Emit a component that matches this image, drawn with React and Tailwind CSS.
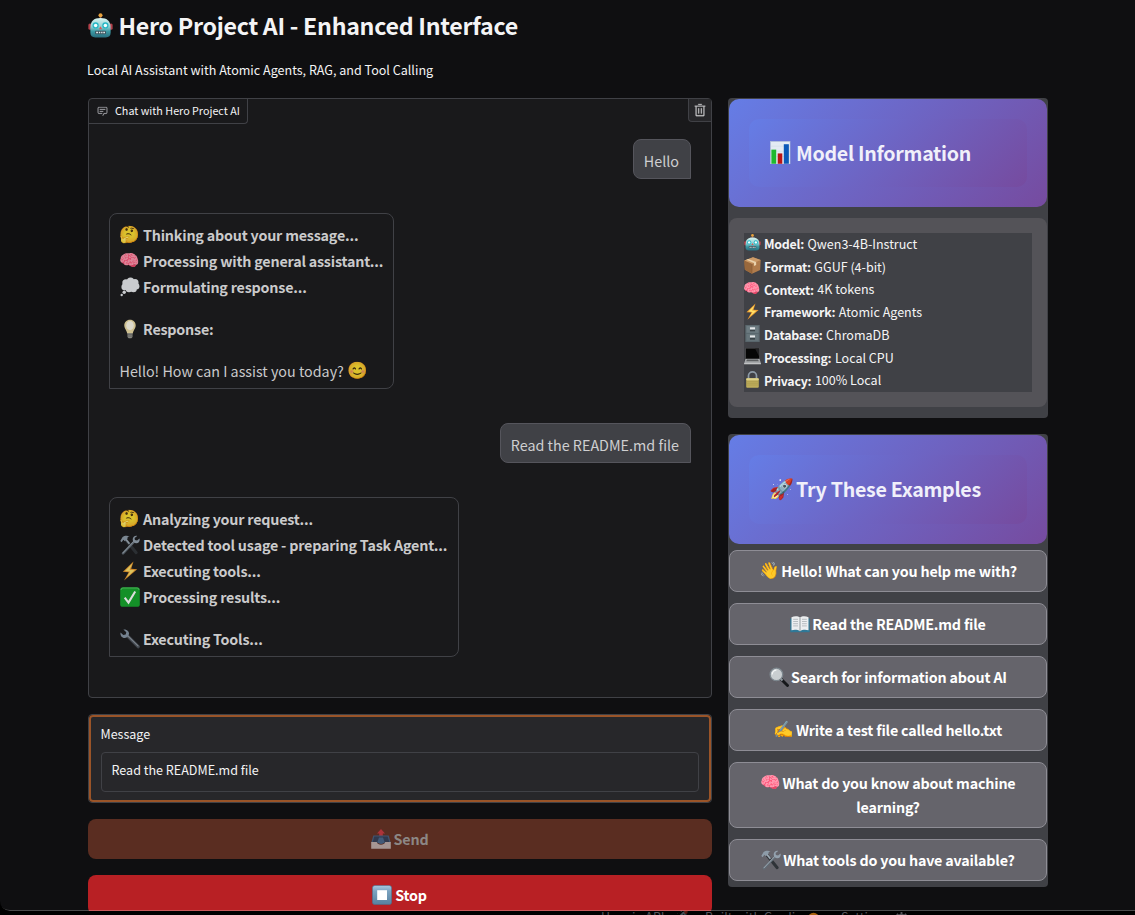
import React from 'react';

const FONT = 'font-["Noto_Sans_CJK_SC","Noto_Sans",sans-serif]';

function Robot() {
  return (
    <svg viewBox="0 0 20 20" className="h-full w-full">
      <defs>
        <linearGradient id="rb" x1="0" y1="0" x2="0" y2="1">
          <stop offset="0" stopColor="#d9f4f2" />
          <stop offset=".45" stopColor="#8ccfd2" />
          <stop offset=".7" stopColor="#3b98a3" />
          <stop offset="1" stopColor="#2a6f80" />
        </linearGradient>
      </defs>
      <rect x="9.3" y="2" width="1.4" height="3" fill="#8a5a4b" />
      <circle cx="10" cy="1.7" r="1.6" fill="#e8a13c" />
      <rect x="0.3" y="8.4" width="2.6" height="5" rx="1.2" fill="#b4404a" />
      <rect x="17.1" y="8.4" width="2.6" height="5" rx="1.2" fill="#b4404a" />
      <path d="M1.9 12C1.9 6.5 4.6 4 10 4s8.1 2.500 8.100 8v3.600c0 2.600-1.300 3.900-3.900 3.900H5.800c-2.600 0-3.900-1.300-3.900-3.900z" fill="url(#rb)" />
      <circle cx="6.100" cy="9.900" r="2.500" fill="#27b7c6" />
      <circle cx="13.900" cy="9.900" r="2.500" fill="#27b7c6" />
      <circle cx="6.100" cy="9.900" r="1.400" fill="#f4ffff" />
      <circle cx="13.900" cy="9.900" r="1.400" fill="#f4ffff" />
      <path d="M10 10.500l1.200 2.400H8.800z" fill="#e05252" />
      <rect x="5.600" y="14.200" width="8.800" height="2.700" rx=".8" fill="#3d5560" />
      <path d="M6.500 14.900h1.500v1.300H6.500zM8.700 14.900h1.100v1.300H8.700zM10.500 14.900h1.100v1.300h-1.100zM12.200 14.900h1.400v1.300h-1.400z" fill="#dfe9ea" />
    </svg>
  );
}

function Chart() {
  return (
    <svg viewBox="0 0 20 20" className="h-full w-full">
      <rect x=".4" y=".4" width="17" height="19.600" fill="#e3ebf4" stroke="#b9c6d6" strokeWidth=".5" />
      <path d="M1 4.500h16M1 9h16M1 13.500h16" stroke="#cdd8e4" strokeWidth=".4" />
      <rect x="1.200" y="7.500" width="4.200" height="12.300" fill="#1fb92f" />
      <rect x="6.700" y="10.800" width="4" height="9" fill="#bb1414" />
      <rect x="12" y="2.800" width="4.400" height="17" fill="#0b59b8" />
    </svg>
  );
}

function Stop() {
  return (
    <svg viewBox="0 0 20 20" className="h-full w-full">
      <defs>
        <linearGradient id="sb" x1="0" y1="0" x2="0" y2="1">
          <stop offset="0" stopColor="#a9cbe2" />
          <stop offset=".3" stopColor="#7ba3c0" />
          <stop offset="1" stopColor="#57809f" />
        </linearGradient>
      </defs>
      <rect x=".4" y=".4" width="19.200" height="19.200" rx="2.600" fill="url(#sb)" stroke="#46708f" strokeWidth=".6" />
      <rect x="5.200" y="5.200" width="9.800" height="9.800" fill="#fff" />
    </svg>
  );
}

function Lock() {
  return (
    <svg viewBox="0 0 20 20" className="h-full w-full">
      <path d="M5.300 10V5.700a4.700 4.700 0 0 1 9.400 0V10" fill="none" stroke="#8d9aa6" strokeWidth="2" />
      <rect x="2.600" y="8.600" width="14.800" height="11" rx="1.200" fill="#bfae5c" />
      <rect x="2.600" y="8.600" width="14.800" height="2.200" rx="1" fill="#ded28c" />
      <path d="M3 12.500h14M3 14.500h14M3 16.500h14" stroke="#a5954a" strokeWidth=".6" />
    </svg>
  );
}

function Cabinet() {
  return (
    <svg viewBox="0 0 20 20" className="h-full w-full">
      <rect x="1.500" y="0" width="17" height="20" rx=".6" fill="#59666c" />
      <rect x="2.800" y="1" width="14.400" height="8.200" fill="#6d7b81" />
      <rect x="2.800" y="10.400" width="14.400" height="8.200" fill="#66747a" />
      <rect x="7" y="2.700" width="6" height="2.400" fill="#e4e7e8" />
      <rect x="7" y="12.200" width="6" height="2.400" fill="#e4e7e8" />
      <path d="M7 6.800h6M7 16.300h6" stroke="#2c3539" strokeWidth="1.300" />
    </svg>
  );
}

function Laptop() {
  return (
    <svg viewBox="0 0 20 20" className="h-full w-full">
      <path d="M1.500 0h17v13H1.500z" fill="#4a4a4c" />
      <path d="M2.300.7h15.400v11.600H2.300z" fill="#060606" />
      <path d="M13 .7h4.700v9z" fill="#202022" />
      <path d="M1.700 12.900h16.600l1.600 5H.1z" fill="#a6a8aa" />
      <path d="M3.500 13.600h13l.8 2H2.700z" fill="#5d5f61" />
      <path d="M.1 17.900h19.800v1.200H.1z" fill="#dedfe0" />
    </svg>
  );
}

function Thought() {
  return (
    <svg viewBox="0 0 20 20" className="h-full w-full">
      <g fill="#e8ebee">
        <circle cx="6" cy="6" r="3.700" /><circle cx="10.500" cy="4" r="3.600" /><circle cx="15" cy="5.500" r="3.500" />
        <circle cx="16.200" cy="9.300" r="3.200" /><circle cx="4.700" cy="10" r="3.300" /><circle cx="9" cy="12" r="3.300" />
        <circle cx="13.500" cy="12" r="3.300" /><circle cx="10.500" cy="8" r="5" />
        <circle cx="4.200" cy="15.200" r="1.700" /><circle cx="1.700" cy="18" r="1.200" />
      </g>
    </svg>
  );
}

function Bulb() {
  return (
    <svg viewBox="0 0 20 20" className="h-full w-full">
      <path d="M10 .8c-3.500 0-5.700 2.500-5.700 5.600 0 3 2.300 4.300 2.900 8.100h5.600c.6-3.800 2.900-5.100 2.900-8.100C15.700 3.300 13.500.8 10 .8z" fill="#efdfa6" />
      <ellipse cx="10" cy="6.500" rx="3.800" ry="4.600" fill="#fffbea" />
      <path d="M7.500 14.300h5v3.600l-1.200 1.300H8.700l-1.200-1.300z" fill="#9a9a92" />
      <path d="M7.500 15.600h5M7.500 17.100h5" stroke="#5c5c58" strokeWidth=".6" />
    </svg>
  );
}

function Bolt() {
  return (
    <svg viewBox="0 0 20 20" className="h-full w-full">
      <path d="M13.500.6L2.800 10.800l5.900.5L4 19.600 17.200 8.300l-6-.5z" fill="#ec9a2c" />
      <path d="M12.300 2.600L5 10l5 .5-3.300 5.700 8-7-5.200-.5z" fill="#ffe16a" />
    </svg>
  );
}

function Wrench() {
  return (
    <svg viewBox="0 0 20 20" className="h-full w-full">
      <path d="M8.200 7.700l10 10" stroke="#4a5058" strokeWidth="3.300" strokeLinecap="round" />
      <path d="M8.200 7.200l9.800 9.700" stroke="#8b949d" strokeWidth="1.200" strokeLinecap="round" />
      <path d="M3.400.6l2.900 2.700-.6 2.300-2.400.5L.5 3.500C.1 6.600 1.800 9 4.700 9.100c1.400 0 3.900-1.500 4.300-4C9.300 2.400 6.500 0 3.400.6z" fill="#8595a5" />
    </svg>
  );
}

function Tools() {
  return (
    <svg viewBox="0 0 20 20" className="h-full w-full">
      <path d="M5.500 4.500l10.700 13.200" stroke="#2f3338" strokeWidth="3" strokeLinecap="round" />
      <path d="M5.800 4.200l3.600 4.500" stroke="#9daab5" strokeWidth="1.800" />
      <path d="M.3 5.900L2.600 2C4.500.5 7 .4 9.800 1.300 8 1.600 7.300 2.300 7.500 3.800L4.800 6.200 3.400 4.700 1.600 7.200z" fill="#8d9ba8" />
      <path d="M14.300 6.500L3 18.400" stroke="#626d77" strokeWidth="2.300" strokeLinecap="round" />
      <path d="M14.100 6.100L3 17.800" stroke="#a5b0ba" strokeWidth=".9" strokeLinecap="round" />
      <path d="M17.200.9l-2.600 2 .3 2.200 2.200.5 2.400-2.200c.8 2.500-.7 4.700-3 4.800-2 .1-3.800-1.500-3.800-3.700C12.700 2.200 14.800.4 17.200.9z" fill="#93a1ae" />
    </svg>
  );
}

function Check() {
  return (
    <svg viewBox="0 0 20 20" className="h-full w-full">
      <rect x=".2" y=".2" width="19.600" height="19.600" rx="2.600" fill="#14a52b" />
      <path d="M1 3Q1 1 3 1h14q2 0 2 2" fill="none" stroke="#5fd06f" strokeWidth=".8" />
      <path d="M4.700 10.700l3.800 4.900L15.200 4.500" fill="none" stroke="#fff" strokeWidth="2.100" />
    </svg>
  );
}

function Search() {
  return (
    <svg viewBox="0 0 20 20" className="h-full w-full">
      <path d="M11.500 11.500l7 7" stroke="#15171a" strokeWidth="2.900" strokeLinecap="round" />
      <path d="M11 11l2.500 2.500" stroke="#8f989f" strokeWidth="2" />
      <circle cx="7.400" cy="7.400" r="6.300" fill="#c9ced1" stroke="#7d878e" strokeWidth="1.300" />
      <path d="M3.200 7.400a4.200 4.200 0 0 1 4.200-4.200" fill="none" stroke="#f2f5f6" strokeWidth="1.200" />
    </svg>
  );
}

function Outbox() {
  return (
    <svg viewBox="0 0 20 20" className="h-full w-full">
      <path d="M10 0l4 4.600h-2.200V9H8.200V4.600H6z" fill="#e4374a" />
      <path d="M2.300 6.500h15.400l2.100 7.500H.2z" fill="#2f6fa5" />
      <path d="M3.300 7.600h13.400l1.700 6H1.600z" fill="#17426b" />
      <path d="M.2 13h5.600c.8 3.500 7.600 3.500 8.400 0h5.600v6.700H.2z" fill="#d9dcdf" />
      <path d="M6.500 12.700c.8 3 6.200 3 7 0L12 8.500H8z" fill="#3379b2" />
    </svg>
  );
}

function Parcel() {
  return (
    <svg viewBox="0 0 20 20" className="h-full w-full">
      <path d="M.4 4.200L10.600.2l9 3.400-.6 11.700-9.600 4.500L1 15z" fill="#b07c4c" />
      <path d="M.4 4.200L9.600 8l-.2 11.800L1 15z" fill="#99683c" />
      <path d="M.4 4.200L10.600.2l9 3.400L9.600 8z" fill="#cc9b68" />
      <path d="M5 2.400l9.300 3.500v3.600l-2.600 1.200V7.100L2.800 3.300z" fill="#e9d2ac" />
      <path d="M9.600 8l-.2 11.800" stroke="#7a5230" strokeWidth=".5" />
    </svg>
  );
}

function Book() {
  return (
    <svg viewBox="0 0 20 20" className="h-full w-full">
      <path d="M.3 4.500h19.400v13.700H.3z" fill="#2f7897" />
      <path d="M1.500 3.300C4.500 1.700 8 1.800 10 3.600c2-1.800 5.500-1.900 8.500-.3v12.900c-3-.9-6.300-.7-8.500 1-2.200-1.700-5.500-1.900-8.500-1z" fill="#eceef0" />
      <path d="M10 3.600v13.600" stroke="#8c9499" strokeWidth=".9" />
      <path d="M3.200 5.300h4.800M3.200 7.500h4.800M3.200 9.700h4.800M3.200 11.900h4.800M12 5.300h4.800M12 7.500h4.800M12 9.700h4.800M12 11.900h4.800" stroke="#a9b0b5" strokeWidth=".8" />
    </svg>
  );
}

const DRAWN = {
  '🤖': Robot, '📊': Chart, '⏹️': Stop, '🔒': Lock, '🗄️': Cabinet, '💻': Laptop, '💭': Thought,
  '💡': Bulb, '⚡': Bolt, '🔧': Wrench, '🛠️': Tools, '✅': Check, '🔍': Search, '📤': Outbox, '📦': Parcel, '📖': Book,
};

function Emoji({ e, className = 'w-5 h-5 mr-[3px] text-[16.5px]' }) {
  const D = DRAWN[e];
  const tone = e === '🧠' ? 'hue-rotate-[-14deg] saturate-150 brightness-90' : '';
  return (
    <span className={`inline-flex shrink-0 items-center justify-center font-normal leading-none tracking-normal ${className}`}>
      {D ? <D /> : <span className={`font-["Noto_Color_Emoji"] ${tone}`}>{e}</span>}
    </span>
  );
}

function Step({ e, children }) {
  return (
    <div className="flex h-[26px] items-center font-bold tracking-[-0.2px]">
      <Emoji e={e} className="mr-[3.500px] h-5 w-5 text-[16.5px] opacity-85" />
      <span>{children}</span>
    </div>
  );
}

function UserBubble({ children }) {
  return (
    <div className="flex h-10 items-center self-end rounded-lg rounded-br-none border border-[#55555c] bg-[#404146] pl-[10px] pr-[11px] pt-[3px] text-[14.33px] text-[#cfcfd1]">
      {children}
    </div>
  );
}

function BotBubble({ className, children }) {
  return (
    <div className={`flex flex-col self-start rounded-lg rounded-bl-none border border-[#404146] pl-[9.500px] pt-[8px] text-[14.3px] text-[#cacacb] ${className}`}>
      {children}
    </div>
  );
}

function PanelHeader({ e, children, className }) {
  return (
    <div className={`rounded-[10px] bg-[linear-gradient(135deg,#657de6_0%,#764b9f_100%)] p-5 ${className}`}>
      <div className="flex h-full items-center rounded-[10px] bg-[linear-gradient(135deg,#657de6_0%,#764b9f_100%)] pb-px pl-5 text-[19.6px] font-bold tracking-[-0.27px] text-[#f0f0fa]">
        <Emoji e={e} className="mr-[2px] h-[23px] w-[25px] text-[20px]" />
        <span>{children}</span>
      </div>
    </div>
  );
}

const INFO = [
  ['🤖', 'Model:', 'Qwen3-4B-Instruct'],
  ['📦', 'Format:', 'GGUF (4-bit)'],
  ['🧠', 'Context:', '4K tokens'],
  ['⚡', 'Framework:', 'Atomic Agents'],
  ['🗄️', 'Database:', 'ChromaDB'],
  ['💻', 'Processing:', 'Local CPU'],
  ['🔒', 'Privacy:', '100% Local'],
];

const EXAMPLES = [
  ['👋', 'Hello! What can you help me with?'],
  ['📖', 'Read the README.md file'],
  ['🔍', 'Search for information about AI'],
  ['✍️', 'Write a test file called hello.txt'],
  ['🧠', 'What do you know about machine learning?'],
  ['🛠️', 'What tools do you have available?'],
];

export default function App() {
  return (
    <div className={`h-[915px] w-[1135px] overflow-hidden bg-black text-[#f4f4f5] ${FONT}`}>
      <div className="relative h-[911px] overflow-hidden rounded-bl-[10px] bg-[#0f0f11]">
        <div className="mx-[88px] w-[960px]">
          <h1 className="flex h-[52px] items-center pb-[2px] text-[23.2px] font-bold tracking-[-0.28px]">
            <Emoji e="🤖" className="mr-[5.500px] h-[25px] w-[25px]" />
            Hero Project AI - Enhanced Interface
          </h1>
          <p className="-ml-px flex h-[37px] items-center text-[12.56px]">Local AI Assistant with Atomic Agents, RAG, and Tool Calling</p>
          <div className="mt-[9px] flex items-start gap-4">
            <main className="flex w-[624px] flex-col">
              <section className="h-[600px] rounded-[4px] border border-[#404146] bg-[#19191b]">
                <div className="flex items-start justify-between">
                  <div className="flex h-[25px] items-center rounded-br-[4px] border-b border-r border-[#404146] pl-[7.500px] pr-[7.500px] text-[10.76px]">
                    <svg viewBox="0 0 32 32" className="mr-[7.500px] h-3 w-[11px]" fill="#a8a8ad">
                      <path d="M17.740 30L16 29l4-7h6a2 2 0 0 0 2-2V8a2 2 0 0 0-2-2H6a2 2 0 0 0-2 2v12a2 2 0 0 0 2 2h9v2H6a4 4 0 0 1-4-4V8a4 4 0 0 1 4-4h20a4 4 0 0 1 4 4v12a4 4 0 0 1-4 4h-4.840z" stroke="#a8a8ad" strokeWidth=".6" />
                      <path d="M8 10h16v2H8zM8 16h10v2H8z" stroke="#a8a8ad" strokeWidth=".6" />
                    </svg>
                    Chat with Hero Project AI
                  </div>
                  <div className="flex h-[23px] w-[23px] items-center justify-center rounded-bl-[4px] border-b border-l border-[#404146] bg-[#27272a]">
                    <svg viewBox="0 0 32 32" className="h-[14px] w-[14px]" fill="#cfcfd2" stroke="#cfcfd2" strokeWidth=".5">
                      <path d="M12 12h2v12h-2zM18 12h2v12h-2z" />
                      <path d="M4 6v2h2v20a2 2 0 0 0 2 2h16a2 2 0 0 0 2-2V8h2V6zm4 22V8h16v20zM12 2h8v2h-8z" />
                    </svg>
                  </div>
                </div>
                <div className="flex flex-col px-5 pt-[15px]">
                  <UserBubble>Hello</UserBubble>
                  <BotBubble className="mt-[34px] h-[176px] w-[285px]">
                    <Step e="🤔">Thinking about your message...</Step>
                    <Step e="🧠">Processing with general assistant...</Step>
                    <Step e="💭">Formulating response...</Step>
                    <div className="h-4" />
                    <Step e="💡">Response:</Step>
                    <div className="mt-4 flex h-[26px] items-center">
                      <span className="mr-1">Hello! How can I assist you today?</span>
                      <Emoji e="😊" className="h-5 w-5 text-[16.5px] opacity-85" />
                    </div>
                  </BotBubble>
                  <div className="mt-[34px] flex flex-col">
                    <UserBubble>Read the README.md file</UserBubble>
                  </div>
                  <BotBubble className="mt-[34px] h-[160px] w-[350px]">
                    <Step e="🤔">Analyzing your request...</Step>
                    <Step e="🛠️">Detected tool usage - preparing Task Agent...</Step>
                    <Step e="⚡">Executing tools...</Step>
                    <Step e="✅">Processing results...</Step>
                    <div className="h-4" />
                    <Step e="🔧">Executing Tools...</Step>
                  </BotBubble>
                </div>
              </section>
              <section className="mt-4 rounded-[4px] border border-[#404146]">
                <div className="h-[87px] rounded-[4px] border-2 border-[#9a5428] bg-[#27272a] px-[10px] pt-[7px]">
                  <label className="-ml-[.5px] flex h-5 items-center text-[12.5px]">Message</label>
                  <div className="mt-[8px] flex h-10 items-center rounded-[4px] border border-[#404146] px-[9.500px] pb-[4px] text-[12.56px]">Read the README.md file</div>
                </div>
              </section>
              <button className="mt-4 flex h-10 items-center justify-center rounded-lg bg-[#5a2d21] pr-px text-[14.3px] font-bold tracking-[-0.18px] text-[#8c8785]">
                <Emoji e="📤" className="mr-[3px] h-5 w-5 opacity-60" />Send
              </button>
              <button className="mt-4 flex h-10 items-center justify-center rounded-lg bg-[#b82024] pr-px text-[14.3px] font-bold tracking-[-0.18px] text-white">
                <Emoji e="⏹️" />Stop
              </button>
            </main>
            <aside className="flex w-[320px] flex-col gap-4">
              <section className="h-[320px] rounded-[4px] bg-[#404146] p-px">
                <PanelHeader e="📊" className="h-[108px]">Model Information</PanelHeader>
                <div className="mt-[11px] h-[189px] rounded-lg bg-[#545358] p-[15px]">
                  <div className="h-[159px] bg-[#404146] text-[12.54px]">
                    {INFO.map(([e, k, v]) => (
                      <div key={k} className="flex h-[22.75px] items-center">
                        <Emoji e={e} className="mb-[3px] mr-[3px] h-[17px] w-[17px] text-[14px]" />
                        <span className="mr-[3.500px] text-[12.4px] font-bold tracking-[-0.24px]">{k}</span>
                        <span>{v}</span>
                      </div>
                    ))}
                  </div>
                </div>
              </section>
              <section className="h-[453px] rounded-[4px] bg-[#404146] p-px">
                <PanelHeader e="🚀" className="h-[109px]">Try These Examples</PanelHeader>
                <div className="mt-[6px] flex flex-col gap-[11px]">
                  {EXAMPLES.map(([e, t]) => (
                    <button key={t} className="rounded-lg border border-[#8e8d95] bg-[#65646b] px-7 py-2 text-center text-[14.3px] font-bold leading-6 tracking-[-0.18px] text-white">
                      <Emoji e={e} className="mr-[2px] h-6 w-5 py-[2px] align-top text-[16.5px]" />{t}
                    </button>
                  ))}
                </div>
              </section>
            </aside>
          </div>
        </div>
        <div className="pointer-events-none absolute inset-x-[-2px] bottom-0 top-0 rounded-bl-[12px] border-b border-white/25" />
      </div>
      <footer className="flex h-1 items-start pl-[601px] text-[12.5px] leading-[18px] text-[#55555a]">
        <span className="-mt-[3px] w-[74px] shrink-0">Use via API</span>
        <Emoji e="🚀" className="w-[14px] text-[11px] opacity-40" />
        <span className="-mt-[3px] ml-[16px] w-[102px] shrink-0">Built with Gradio</span>
        <svg viewBox="0 0 14 14" className="mt-px h-[13px] w-[13px] shrink-0" fill="none" stroke="#a8620f" strokeWidth="2.500">
          <circle cx="7" cy="7" r="5" />
        </svg>
        <span className="-mt-[3px] ml-[21px] w-[54px] shrink-0">Settings</span>
        <svg viewBox="0 0 14 14" className="mt-px h-[13px] w-[13px] shrink-0" fill="none" stroke="#55555a" strokeWidth="2">
          <circle cx="7" cy="7" r="4" />
          <path d="M7 0v3M2 2l2 2M12 2l-2 2" />
        </svg>
      </footer>
    </div>
  );
}
